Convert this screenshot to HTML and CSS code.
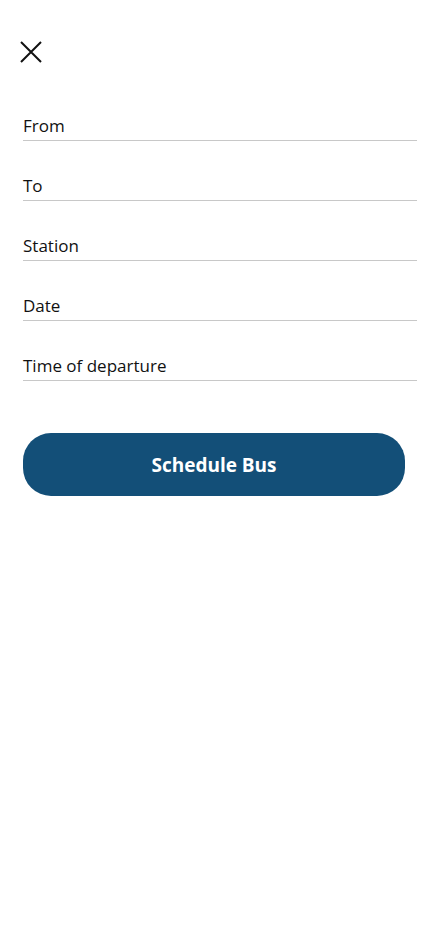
FILE: index.html
```html
<!DOCTYPE html>
<html>
<head>
<meta charset="utf-8">
<link rel="stylesheet" href="styles.css">
</head>
<body>
<div class="screen">
  <header class="top">
    <button class="close" aria-label="Close">
      <svg width="24" height="24" viewBox="0 0 24 24"><path d="M2 2 L22 22 M22 2 L2 22" stroke="#111" stroke-width="2" fill="none"/></svg>
    </button>
  </header>
  <form class="form">
    <div class="field"><span class="label">From</span></div>
    <div class="field"><span class="label">To</span></div>
    <div class="field"><span class="label">Station</span></div>
    <div class="field"><span class="label">Date</span></div>
    <div class="field"><span class="label">Time of departure</span></div>
  </form>
  <div class="actions">
    <button class="primary">Schedule Bus</button>
  </div>
</div>
</body>
</html>
```
FILE: styles.css
```css
* { box-sizing: border-box; }
html, body { margin: 0; padding: 0; background: #fff; }
body { font-family: "Open Sans", "Noto Sans", sans-serif; color: #111; }
.screen { width: 428px; min-height: 926px; }
.top { height: 81px; padding: 40px 0 0 19px; }
.close { border: 0; background: none; padding: 0; width: 24px; height: 24px; display: block; }
.close svg { display: block; }
.form { display: flex; flex-direction: column; padding: 0 11px 0 23px; }
.field { height: 60px; display: flex; align-items: flex-end; border-bottom: 1px solid #c8c8c8; padding-bottom: 3px; }
.label { font-size: 17px; line-height: 22px; }
.actions { padding: 52px 23px 0 23px; }
.primary { width: 100%; height: 63px; border: 0; border-radius: 28px; background: #134f78; color: #fff; font-family: "Open Sans", "Noto Sans", sans-serif; font-weight: 700; font-size: 19px; }
```
